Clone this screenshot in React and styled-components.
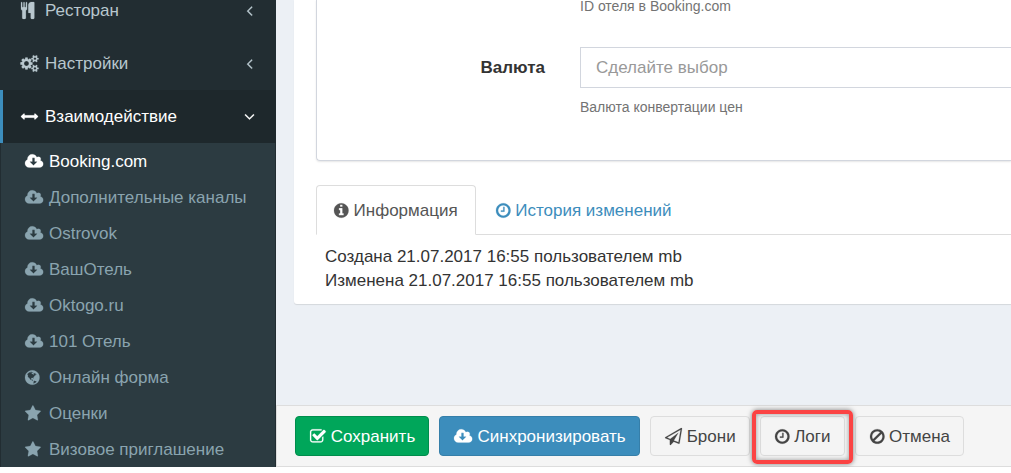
import React from 'react'
import styled, { createGlobalStyle, css } from 'styled-components'

const colors = {
  blue: '#3c8dbc',
  green: '#00a65a',
  border: '#d2d6de',
  line: '#dddddd',
  sidebar: '#222d32',
  sidebarActive: '#1e282c',
  submenu: '#2c3b41',
}

const GlobalStyle = createGlobalStyle`
  * {
    box-sizing: border-box;
  }

  body {
    margin: 0;
    background: #fff;
    color: #333;
    font-family: 'Liberation Sans', Arial, sans-serif;
    font-size: 17px;
    line-height: 24px;
    overflow: hidden;
  }
`

// [viewBox x, viewBox width, path]
const icons = {
  cutlery: [192, 1408, 'M832 64v640q0 61-35.5 111t-92.5 70v779q0 52-38 90t-90 38h-128q-52 0-90-38t-38-90v-779q-57-20-92.5-70t-35.5-111v-640q0-26 19-45t45-19 45 19 19 45v416q0 26 19 45t45 19 45-19 19-45v-416q0-26 19-45t45-19 45 19 19 45v416q0 26 19 45t45 19 45-19 19-45v-416q0-26 19-45t45-19 45 19 19 45zm768 0v1600q0 52-38 90t-90 38h-128q-52 0-90-38t-38-90v-512h-224q-13 0-22.5-9.5t-9.5-22.5v-800q0-132 94-226t226-94h256q26 0 45 19t19 45z'],
  cogs: [0, 1920, 'M832 896q0-106-75-181t-181-75-181 75-75 181 75 181 181 75 181-75 75-181zm768 512q0-52-38-90t-90-38-90 38-38 90q0 53 37.5 90.5t90.5 37.5 90.5-37.5 37.5-90.5zm0-1024q0-52-38-90t-90-38-90 38-38 90q0 53 37.5 90.5t90.5 37.5 90.5-37.5 37.5-90.5zm-384 421v185q0 10-7 19.5t-16 10.5l-155 24q-11 35-32 76 34 48 90 115 7 11 7 20 0 12-7 19-23 30-82.5 89.5t-78.5 59.5q-11 0-21-7l-115-90q-37 19-77 31-11 108-23 155-7 24-30 24h-186q-11 0-20-7.5t-10-17.5l-23-153q-34-10-75-31l-118 89q-7 7-20 7-11 0-21-8-144-133-144-160 0-9 7-19 10-14 41-53t47-61q-23-44-35-82l-152-24q-10-1-17-9.5t-7-19.5v-185q0-10 7-19.5t16-10.5l155-24q11-35 32-76-34-48-90-115-7-11-7-20 0-12 7-20 22-30 82-89t79-59q11 0 21 7l115 90q34-18 77-32 11-108 23-154 7-24 30-24h186q11 0 20 7.5t10 17.5l23 153q34 10 75 31l118-89q8-7 20-7 11 0 21 8 144 133 144 160 0 8-7 19-12 16-42 54t-45 60q23 48 34 82l152 23q10 2 17 10.5t7 19.5zm640 533v140q0 16-149 31-12 27-30 52 51 113 51 138 0 4-4 7-122 71-124 71-8 0-46-47t-52-68q-20 2-30 2t-30-2q-14 21-52 68t-46 47q-2 0-124-71-4-3-4-7 0-25 51-138-18-25-30-52-149-15-149-31v-140q0-16 149-31 13-29 30-52-51-113-51-138 0-4 4-7 4-2 35-20t59-34 30-16q8 0 46 46.5t52 67.5q20-2 30-2t30 2q51-71 92-112l6-2q4 0 124 70 4 3 4 7 0 25-51 138 17 23 30 52 149 15 149 31zm0-1024v140q0 16-149 31-12 27-30 52 51 113 51 138 0 4-4 7-122 71-124 71-8 0-46-47t-52-68q-20 2-30 2t-30-2q-14 21-52 68t-46 47q-2 0-124-71-4-3-4-7 0-25 51-138-18-25-30-52-149-15-149-31v-140q0-16 149-31 13-29 30-52-51-113-51-138 0-4 4-7 4-2 35-20t59-34 30-16q8 0 46 46.5t52 67.5q20-2 30-2t30 2q51-71 92-112l6-2q4 0 124 70 4 3 4 7 0 25-51 138 17 23 30 52 149 15 149 31z'],
  arrows: [0, 1792, 'M1792 896q0 26-19 45l-256 256q-19 19-45 19t-45-19-19-45v-128h-1024v128q0 26-19 45t-45 19-45-19l-256-256q-19-19-19-45t19-45l256-256q19-19 45-19t45 19 19 45v128h1024v-128q0-26 19-45t45-19 45 19l256 256q19 19 19 45z'],
  angleLeft: [0, 1792, 'M1203 544q0 13-10 23l-393 393 393 393q10 10 10 23t-10 23l-50 50q-10 10-23 10t-23-10l-466-466q-10-10-10-23t10-23l466-466q10-10 23-10t23 10l50 50q10 10 10 23z'],
  angleDown: [0, 1792, 'M1395 736q0 13-10 23l-466 466q-10 10-23 10t-23-10l-466-466q-10-10-10-23t10-23l50-50q10-10 23-10t23 10l393 393 393-393q10-10 23-10t23 10l50 50q10 10 10 23z'],
  cloud: [0, 1920, 'M1280 928q0-14-9-23t-23-9h-224v-352q0-13-9.5-22.5t-22.5-9.5h-192q-13 0-22.5 9.5t-9.5 22.5v352h-224q-13 0-22.5 9.5t-9.5 22.5q0 14 9 23l352 352q9 9 23 9t23-9l351-351q10-12 10-24zm640 224q0 159-112.5 271.5t-271.5 112.5h-1088q-185 0-316.5-131.5t-131.5-316.5q0-130 70-240t188-165q-2-30-2-43 0-212 150-362t362-150q156 0 285.5 87t188.5 231q71-62 166-62 106 0 181 75t75 181q0 76-41 138 130 31 213.5 135.5t83.5 238.5z'],
  globe: [128, 1536, 'M896 128q209 0 385.5 103t279.5 279.5 103 385.5-103 385.5-279.5 279.5-385.5 103-385.5-103-279.5-279.5-103-385.5 103-385.5 279.5-279.5 385.5-103zm274 521q-2 1-9.5 9.5t-13.5 9.5q2 0 4.5-5t5-11 3.5-7q6-7 22-15 14-6 52-12 34-8 51 11-2-2 9.5-13t14.5-12q3-2 15-4.5t15-7.5l2-22q-12 1-17.5-7t-6.5-21q0 2-6 8 0-7-4.5-8t-11.5 1-9 1q-10-3-15-7.5t-8-16.5-4-15q-2-5-9.5-11t-9.5-10q-1-2-2.5-5.5t-3-6.5-4-5.5-5.5-2.5-7 5-7.5 10-4.5 5q-3-2-6-1.5t-4.5 1-4.5 3-5 3.5q-3 2-8.5 3t-8.5 2q15-5-1-11-10-4-16-3 9-4 7.5-12t-8.5-14h5q-1-4-8.5-8.5t-17.5-8.5-13-6q-8-5-34-9.5t-33-.5q-5 6-4.5 10.5t4 14 3.5 12.5q1 6-5.5 13t-6.5 12q0 7 14 15.5t10 21.5q-3 8-16 16t-16 12q-5 8-1.5 18.5t10.5 16.5q2 2 1.5 4t-3.5 4.5-5.5 4-6.5 3.5l-3 2q-11 5-20.5-6t-13.5-26q-7-25-16-30-23-8-29 1-5-13-41-26-25-9-58-4 6-1 0-15-7-15-19-12 3-6 4-17.5t1-13.5q3-13 12-23 1-1 7-8.5t9.5-13.5.5-6q35 4 50-11 5-5 11.5-17t10.5-17q9-6 14-5.5t14.5 5.5 14.5 5q14 1 15.5-11t-7.5-20q12 1 3-17-4-7-8-9-12-4-27 5-8 4 2 8-1-1-9.5 10.5t-16.5 17.5-16-5q-1-1-5.5-13.5t-9.5-13.5q-8 0-16 15 3-8-11-15t-24-8q19-12-8-27-7-4-20.5-5t-19.5 4q-5 7-5.5 11.5t5 8 10.5 5.5 11.5 4 8.5 3q14 10 8 14-2 1-8.5 3.5t-11.5 4.5-6 4q-3 4 0 14t-2 14q-5-5-9-17.5t-7-16.5q7 9-25 6l-10-1q-4 0-16 2t-20.5 1-13.5-8q-4-8 0-20 1-4 4-2-4-3-11-9.5t-10-8.5q-46 15-94 41 6 1 12-1 5-2 13-6.5t10-5.5q34-14 42-7l5-5q14 16 20 25-7-4-30-1-20 6-22 12 7 12 5 18-4-3-11.5-10t-14.5-11-15-5q-16 0-22 1-146 80-235 222 7 7 12 8 4 1 5 9t2.5 11 11.5-3q9 8 3 19 1-1 44 27 19 17 21 21 3 11-10 18-1-2-9-9t-9-4q-3 5 .5 18.5t10.5 12.5q-7 0-9.5 16t-2.5 35.5-1 23.5l2 1q-3 12 5.5 34.5t21.5 19.5q-13 3 20 43 6 8 8 9 3 2 12 7.5t15 10 10 10.5q4 5 10 22.5t14 23.5q-2 6 9.5 20t10.5 23q-1 0-2.5 1t-2.5 1q3 7 15.5 14t15.5 13q1 3 2 10t3 11 8 2q2-20-24-62-15-25-17-29-3-5-5.5-15.5t-4.5-14.5q2 0 6 1.5t8.5 3.5 7.5 4 2 3q-3 7 2 17.5t12 18.5 17 19 12 13q6 6 14 19.5t0 13.5q9 0 20 10t17 20q5 8 8 26t5 24q2 7 8.5 13.5t12.5 9.5l16 8 13 7q5 2 18.5 10.5t21.5 11.5q10 4 16 4t14.5-2.5 13.5-3.5q15-2 29 15t21 21q36 19 55 11-2 1 .5 7.5t8 15.5 9 14.5 5.5 8.5q5 6 18 15t18 15q6-4 7-9-3 8 7 20t18 10q14-3 14-32-31 15-49-18 0-1-2.5-5.5t-4-8.5-2.5-8.5 0-7.5 5-3q9 0 10-3.5t-2-12.5-4-13q-1-8-11-20t-12-15q-5 9-16 8t-16-9q0 1-1.5 5.5t-1.5 6.5q-13 0-15-1 1-3 2.5-17.5t3.5-22.5q1-4 5.5-12t7.5-14.5 4-12.5-4.5-9.5-17.5-2.5q-19 1-26 20-1 3-3 10.5t-5 11.5-9 7q-7 3-24 2t-24-5q-13-8-22.5-29t-9.5-37q0-10 2.5-26.5t3-25-5.5-24.5q3-2 9-9.5t10-10.5q2-1 4.5-1.5t4.5 0 4-1.5 3-6q-1-1-4-3-3-3-4-3 7 3 28.5-1.5t27.5 1.5q15 11 22-2 0-1-2.5-9.5t-.5-13.5q5 27 29 9 3 3 15.5 5t17.5 5q3 2 7 5.5t5.5 4.5 5-.5 8.5-6.5q10 14 12 24 11 40 19 44 7 3 11 2t4.5-9.5 0-14-1.5-12.5l-1-8v-18l-1-8q-15-3-18.5-12t1.5-18.5 15-18.5q1-1 8-3.5t15.5-6.5 12.5-8q21-19 15-35 7 0 11-9-1 0-5-3t-7.5-5-4.5-2q9-5 2-16 5-3 7.5-11t7.5-10q9 12 21 2 7-8 1-16 5-7 20.5-10.5t18.5-9.5q7 2 8-2t1-12 3-12q4-5 15-9t13-5l17-11q3-4 0-4 18 2 31-11 10-11-6-20 3-6-3-9.5t-15-5.5q3-1 11.5-.5t10.5-1.5q15-10-7-16-17-5-43 12zm-163 877q206-36 351-189-3-3-12.5-4.5t-12.5-3.5q-18-7-24-8 1-7-2.5-13t-8-9-12.5-8-11-7q-2-2-7-6t-7-5.5-7.5-4.5-8.5-2-10 1l-3 1q-3 1-5.5 2.5t-5.5 3-4 3 0 2.5q-21-17-36-22-5-1-11-5.5t-10.5-7-10-1.5-11.5 7q-5 5-6 15t-2 13q-7-5 0-17.5t2-18.5q-3-6-10.5-4.5t-12 4.5-11.5 8.5-9 6.5-8.5 5.5-8.5 7.5q-3 4-6 12t-5 11q-2-4-11.5-6.5t-9.5-5.5q2 10 4 35t5 38q7 31-12 48-27 25-29 40-4 22 12 26 0 7-8 20.5t-7 21.5q0 6 2 16z'],
  star: [64, 1664, 'M1728 647q0 22-26 48l-363 354 86 500q1 7 1 20 0 21-10.5 35.5t-30.5 14.5q-19 0-40-12l-449-236-449 236q-22 12-40 12-21 0-31.5-14.5t-10.5-35.5q0-6 2-20l86-500-364-354q-25-27-25-48 0-37 56-46l502-73 225-455q19-41 49-41t49 41l225 455 502 73q56 9 56 46z'],
  info: [128, 1536, 'M1152 1376v-160q0-14-9-23t-23-9h-96v-512q0-14-9-23t-23-9h-320q-14 0-23 9t-9 23v160q0 14 9 23t23 9h96v320h-96q-14 0-23 9t-9 23v160q0 14 9 23t23 9h448q14 0 23-9t9-23zm-128-896v-160q0-14-9-23t-23-9h-192q-14 0-23 9t-9 23v160q0 14 9 23t23 9h192q14 0 23-9t9-23zm640 416q0 209-103 385.5t-279.5 279.5-385.5 103-385.5-103-279.5-279.5-103-385.5 103-385.5 279.5-279.5 385.5-103 385.5 103 279.5 279.5 103 385.5z'],
  clock: [128, 1536, 'M1024 544v448q0 14-9 23t-23 9h-320q-14 0-23-9t-9-23v-64q0-14 9-23t23-9h224v-352q0-14 9-23t23-9h64q14 0 23 9t9 23zm416 352q0-148-73-273t-198-198-273-73-273 73-198 198-73 273 73 273 198 198 273 73 273-73 198-198 73-273zm224 0q0 209-103 385.5t-279.5 279.5-385.5 103-385.5-103-279.5-279.5-103-385.5 103-385.5 279.5-279.5 385.5-103 385.5 103 279.5 279.5 103 385.5z'],
  check: [64, 1664, 'M1472 930v318q0 119-84.5 203.5t-203.5 84.5h-832q-119 0-203.5-84.5t-84.5-203.5v-832q0-119 84.5-203.5t203.5-84.5h832q63 0 117 25 15 7 18 23 3 17-9 29l-49 49q-10 10-23 10-3 0-9-2-23-6-45-6h-832q-66 0-113 47t-47 113v832q0 66 47 113t113 47h832q66 0 113-47t47-113v-254q0-13 9-22l64-64q10-10 23-10 6 0 12 3 20 8 20 29zm231-489l-814 814q-24 24-57 24t-57-24l-430-430q-24-24-24-57t24-57l110-110q24-24 57-24t57 24l263 263 647-647q24-24 57-24t57 24l110 110q24 24 24 57t-24 57z'],
  plane: [0, 1792, 'M1764 11q33 24 27 64l-256 1536q-5 29-32 45-14 8-31 8-11 0-24-5l-527-215-298 327q-18 21-47 21-14 0-23-4-19-7-30-23.5t-11-36.5v-452l-472-193q-37-14-40-55-3-39 32-59l1664-960q35-21 68 2zm-342 1499l221-1323-1434 827 336 137 863-639-478 797z'],
  ban: [128, 1536, 'M1440 893q0-161-87-295l-754 753q137 89 297 89 111 0 211.5-43.5t173.5-116.5 116-174.5 43-212.5zm-999 299l755-754q-135-91-300-91-148 0-273 73t-198 199-73 274q0 162 89 299zm1223-299q0 157-61 300t-163.5 246-245 164-298.5 61-298.5-61-245-164-163.5-246-61-300 61-299.5 163.5-245.5 245-164 298.5-61 298.5 61 245 164 163.5 245.5 61 299.5z'],
}

const Svg = styled.svg`
  display: block;
  flex: none;
  height: 17px;
  margin-bottom: 1px;
  overflow: visible;
  fill: currentColor;
  stroke: currentColor;
  stroke-width: 20;
`

const Icon = ({ name }) => {
  const [x, width, path] = icons[name]
  return (
    <Svg viewBox={`${x} 0 ${width} 1792`} aria-hidden="true">
      <path d={path} />
    </Svg>
  )
}

const Page = styled.div`
  display: flex;
  overflow: hidden;
`

const Sidebar = styled.nav`
  flex: none;
  width: 276px;
  margin-top: -16px;
  background: ${colors.sidebar};
`

const Menu = styled.ul`
  margin: 0;
  padding: 0;
  list-style: none;
`

const MenuLink = styled.a`
  display: flex;
  align-items: center;
  height: 53px;
  padding: 0 18px;
  border-left: 3px solid transparent;
  color: #b8c7ce;
  text-decoration: none;

  ${({ $active }) =>
    $active &&
    css`
      border-left-color: ${colors.blue};
      background: ${colors.sidebarActive};
      color: #fff;
    `}
`

const IconSlot = styled.span`
  flex: none;
  width: 24px;
`

const MenuLabel = styled.span`
  flex: 1;
`

const Submenu = styled(Menu)`
  margin: 0 1px;
  background: ${colors.submenu};
`

const SubmenuLink = styled.a`
  display: flex;
  align-items: center;
  height: 36px;
  padding: 1px 0 0 24px;
  color: ${({ $active }) => ($active ? '#fff' : '#8aa4af')};
  text-decoration: none;
  white-space: nowrap;
`

const Main = styled.main`
  flex: 1;
  min-width: 0;
  display: flex;
  flex-direction: column;
  background: #ecf0f5;
`

const Box = styled.section`
  margin-left: 18px;
  padding: 0 0 11px 22px;
  border-radius: 0 0 0 3px;
  background: #fff;
  box-shadow: 0 1px 1px rgba(0, 0, 0, 0.1);
`

const Panel = styled.div`
  display: flex;
  flex-direction: column;
  gap: 35px;
  padding-bottom: 47px;
  border: solid ${colors.border};
  border-width: 0 0 1px 1px;
  border-radius: 0 0 0 4px;
  box-shadow: 0 1px 2px rgba(0, 0, 0, 0.1);
`

const FormRow = styled.div`
  display: grid;
  grid-template-columns: 228px 1fr;
  column-gap: 35px;
`

const Label = styled.label`
  padding-top: 9px;
  font-weight: bold;
  text-align: right;
`

const Field = styled.div`
  grid-column: 2;
  display: flex;
  flex-direction: column;
  gap: 13px;
`

const Select = styled.select`
  appearance: none;
  width: 100%;
  height: 41px;
  padding: 0 15px;
  border: 1px solid ${colors.border};
  border-right: 0;
  border-radius: 0;
  background: #fff;
  color: #999;
  font: inherit;
`

const Help = styled.span`
  color: #737373;
  font-size: 14px;
  line-height: 12px;
`

const Tabs = styled.div`
  display: flex;
  gap: 2px;
  margin-top: 24px;
  border-bottom: 1px solid ${colors.line};
`

const Tab = styled.button`
  display: flex;
  align-items: center;
  gap: 5px;
  margin-bottom: -1px;
  padding: 13px 17px 11px;
  border: 1px solid transparent;
  border-radius: 4px 4px 0 0;
  background: transparent;
  color: ${colors.blue};
  font: inherit;

  ${({ $active }) =>
    $active &&
    css`
      border-color: ${colors.line} ${colors.line} #fff;
      background: #fff;
      color: #555;
    `}
`

const History = styled.div`
  padding: 10px 9px 0;
`

const Line = styled.p`
  margin: 0;
`

const ActionBar = styled.footer`
  display: flex;
  gap: 10px;
  margin-top: auto;
  padding: 10px 18px;
  border: solid ${colors.line};
  border-width: 1px 0 1px 1px;
  background: #f5f5f5;
`

const variants = {
  success: ['#fff', colors.green, '#008d4c'],
  primary: ['#fff', colors.blue, '#367fa9'],
  default: ['#444', '#f4f4f4', colors.line],
}

const Button = styled.button`
  display: flex;
  align-items: center;
  gap: 5px;
  height: 40px;
  padding: 1px 13px 0 14px;
  border: 1px solid ${({ $variant }) => variants[$variant][2]};
  border-radius: 4px;
  background: ${({ $variant }) => variants[$variant][1]};
  color: ${({ $variant }) => variants[$variant][0]};
  font: inherit;
  white-space: nowrap;
`

const Marked = styled.div`
  position: relative;

  &::after {
    content: '';
    position: absolute;
    inset: -6px -8px -8px;
    border: 4px solid #fb4343;
    border-radius: 5px;
    box-shadow: 0 0 5px rgba(0, 0, 0, 0.5), inset 0 0 5px rgba(0, 0, 0, 0.4);
    pointer-events: none;
    z-index: 1;
  }
`

const menu = [
  { icon: 'cutlery', label: 'Ресторан' },
  { icon: 'cogs', label: 'Настройки' },
  { icon: 'arrows', label: 'Взаимодействие', active: true },
]

const channels = [
  { icon: 'cloud', label: 'Booking.com', active: true },
  { icon: 'cloud', label: 'Дополнительные каналы' },
  { icon: 'cloud', label: 'Ostrovok' },
  { icon: 'cloud', label: 'ВашОтель' },
  { icon: 'cloud', label: 'Oktogo.ru' },
  { icon: 'cloud', label: '101 Отель' },
  { icon: 'globe', label: 'Онлайн форма' },
  { icon: 'star', label: 'Оценки' },
  { icon: 'star', label: 'Визовое приглашение' },
]

const App = () => {
  return (
    <Page>
      <GlobalStyle />
      <Sidebar>
        <Menu>
          {menu.map(({ icon, label, active }) => (
            <li key={label}>
              <MenuLink href="#" $active={active}>
                <IconSlot><Icon name={icon} /></IconSlot>
                <MenuLabel>{label}</MenuLabel>
                <Icon name={active ? 'angleDown' : 'angleLeft'} />
              </MenuLink>
              {active && (
                <Submenu>
                  {channels.map((item) => (
                    <li key={item.label}>
                      <SubmenuLink href="#" $active={item.active}>
                        <IconSlot><Icon name={item.icon} /></IconSlot>
                        {item.label}
                      </SubmenuLink>
                    </li>
                  ))}
                </Submenu>
              )}
            </li>
          ))}
        </Menu>
      </Sidebar>
      <Main>
        <Box>
          <Panel>
            <FormRow>
              <Field>
                <Help>ID отеля в Booking.com</Help>
              </Field>
            </FormRow>
            <FormRow>
              <Label htmlFor="currency">Валюта</Label>
              <Field>
                <Select id="currency">
                  <option>Сделайте выбор</option>
                </Select>
                <Help>Валюта конвертации цен</Help>
              </Field>
            </FormRow>
          </Panel>
          <Tabs role="tablist">
            <Tab role="tab" aria-selected="true" $active><Icon name="info" />Информация</Tab>
            <Tab role="tab" aria-selected="false"><Icon name="clock" />История изменений</Tab>
          </Tabs>
          <History>
            <Line>Создана 21.07.2017 16:55 пользователем mb</Line>
            <Line>Изменена 21.07.2017 16:55 пользователем mb</Line>
          </History>
        </Box>
        <ActionBar>
          <Button $variant="success"><Icon name="check" />Сохранить</Button>
          <Button $variant="primary"><Icon name="cloud" />Синхронизировать</Button>
          <Button $variant="default"><Icon name="plane" />Брони</Button>
          <Marked>
            <Button $variant="default"><Icon name="clock" />Логи</Button>
          </Marked>
          <Button $variant="default"><Icon name="ban" />Отмена</Button>
        </ActionBar>
      </Main>
    </Page>
  )
}

export default App
